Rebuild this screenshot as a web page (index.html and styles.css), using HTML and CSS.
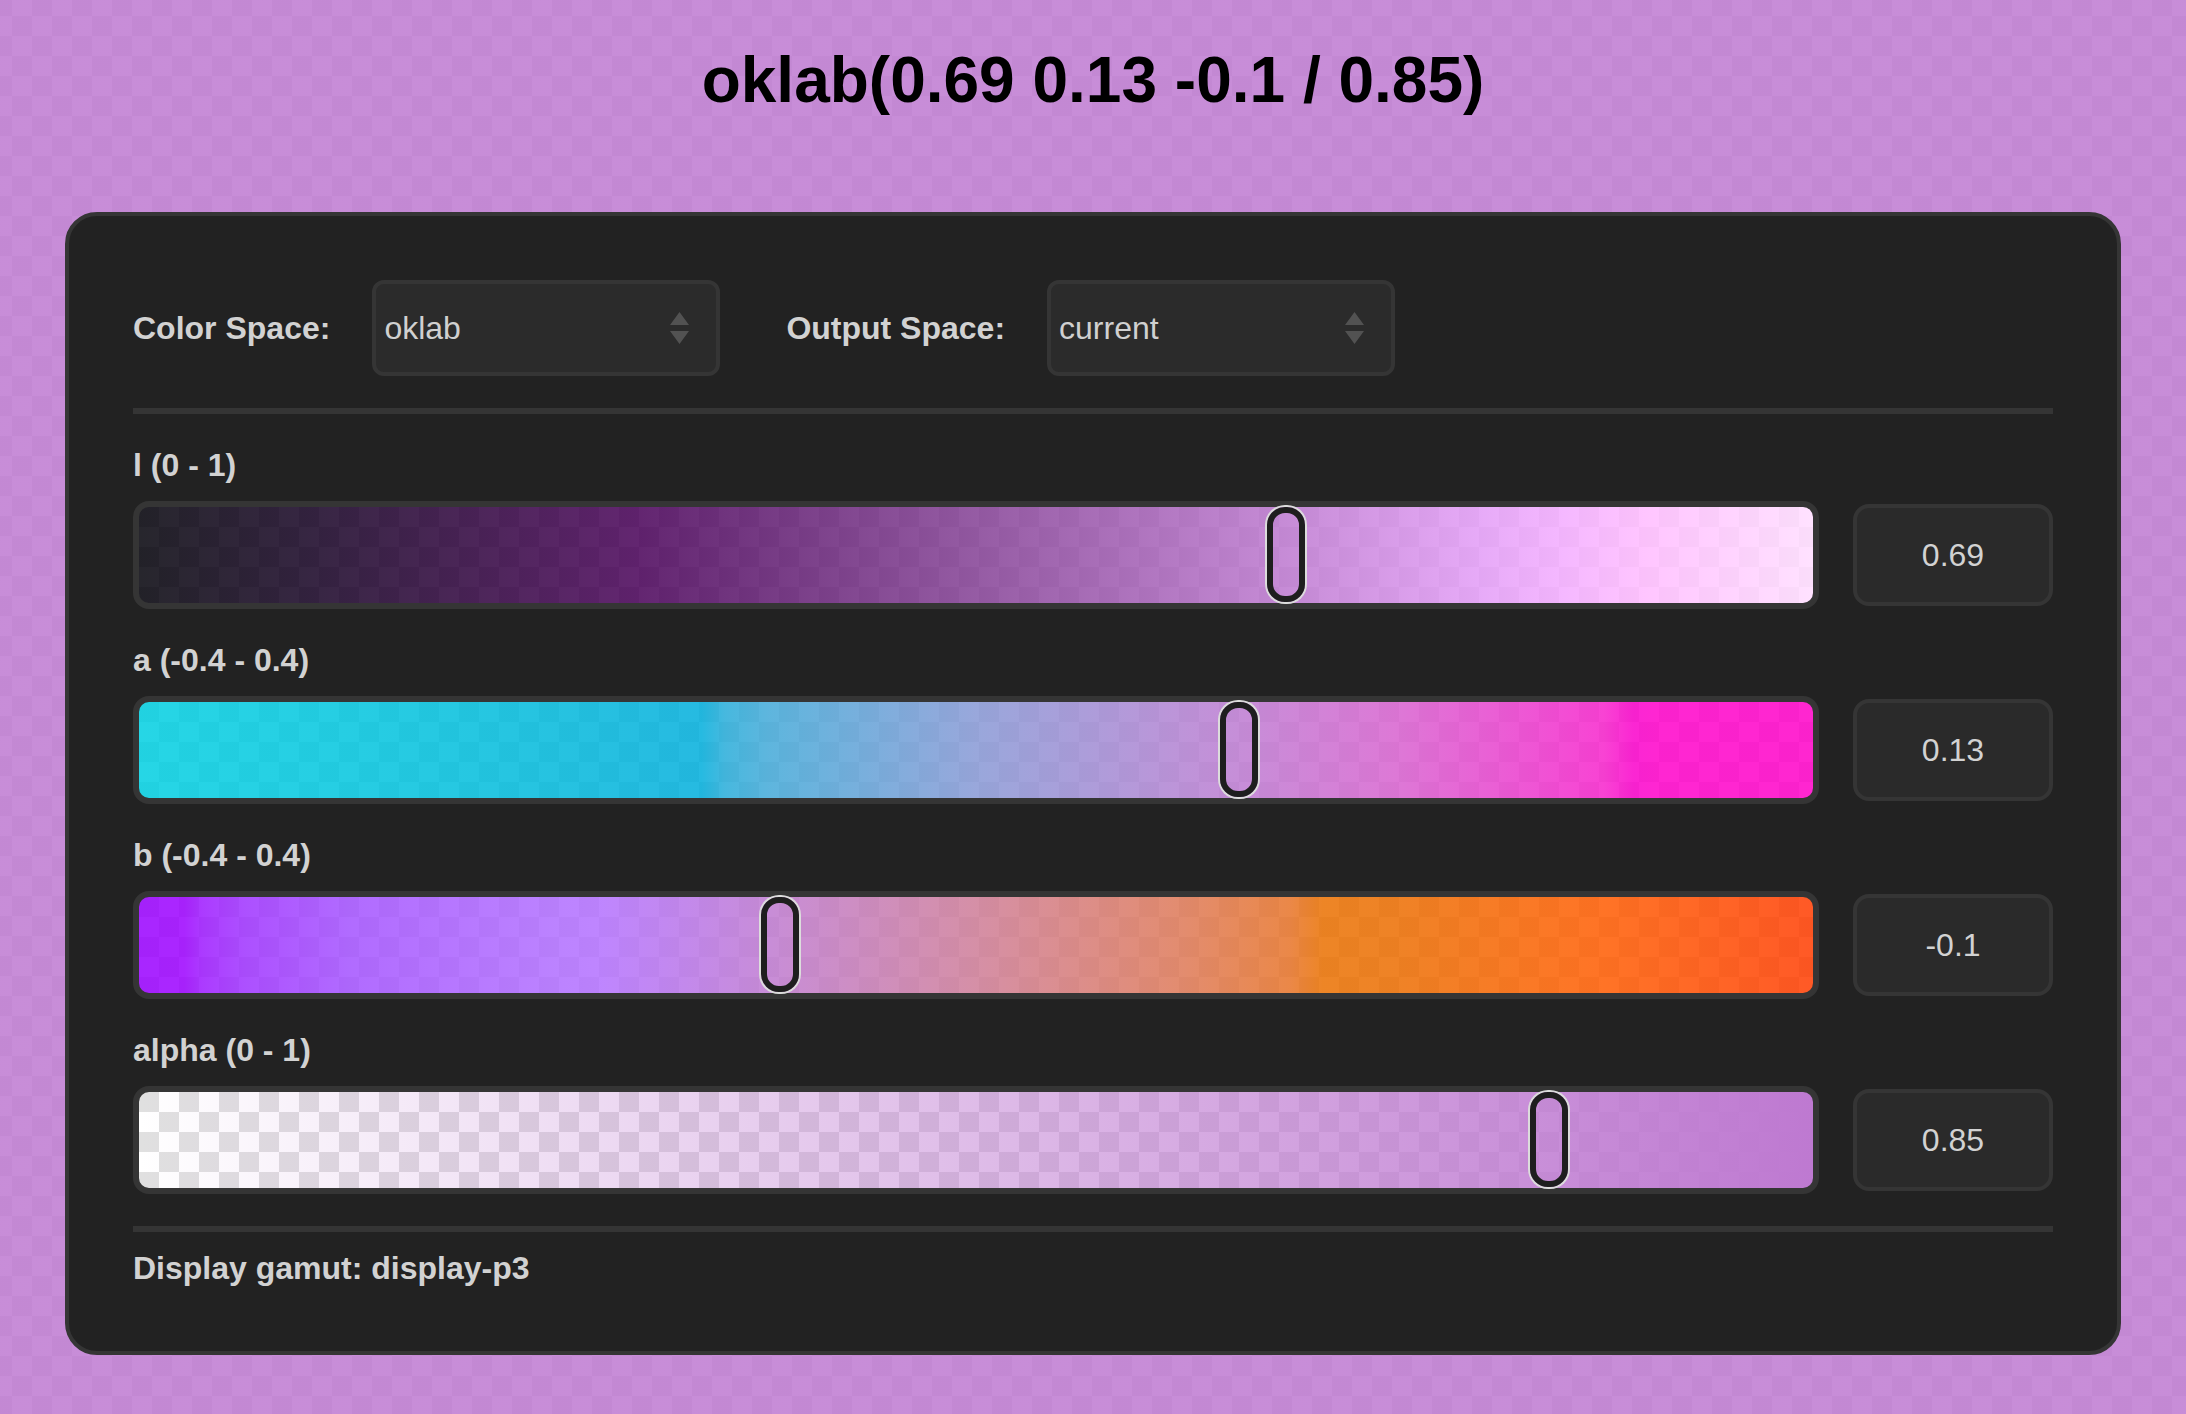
FILE: index.html
```html
<!DOCTYPE html>
<html lang="en">
<head>
<meta charset="utf-8">
<title>oklab color picker</title>
<link rel="stylesheet" href="styles.css">
</head>
<body>
<h1 class="title">oklab(0.69 0.13 -0.1 / 0.85)</h1>
<main class="card">
  <div class="controls">
    <div class="field">
      <span class="field-label">Color Space:</span>
      <div class="select">
        <span class="select-value">oklab</span>
        <svg class="select-arrows" width="19" height="32" viewBox="0 0 19 32"><path d="M0 13 L9.5 0 L19 13 Z M0 19 L19 19 L9.5 32 Z"/></svg>
      </div>
    </div>
    <div class="field">
      <span class="field-label">Output Space:</span>
      <div class="select">
        <span class="select-value">current</span>
        <svg class="select-arrows" width="19" height="32" viewBox="0 0 19 32"><path d="M0 13 L9.5 0 L19 13 Z M0 19 L19 19 L9.5 32 Z"/></svg>
      </div>
    </div>
  </div>
  <div class="divider"></div>
  <div class="channels">
    <div class="channel">
      <div class="channel-label">l (0 - 1)</div>
      <div class="channel-row">
        <div class="track track-l"><div class="thumb" style="--v:0.69"></div></div>
        <div class="value">0.69</div>
      </div>
    </div>
    <div class="channel">
      <div class="channel-label">a (-0.4 - 0.4)</div>
      <div class="channel-row">
        <div class="track track-a"><div class="thumb" style="--v:0.661"></div></div>
        <div class="value">0.13</div>
      </div>
    </div>
    <div class="channel">
      <div class="channel-label">b (-0.4 - 0.4)</div>
      <div class="channel-row">
        <div class="track track-b"><div class="thumb" style="--v:0.38"></div></div>
        <div class="value">-0.1</div>
      </div>
    </div>
    <div class="channel">
      <div class="channel-label">alpha (0 - 1)</div>
      <div class="channel-row">
        <div class="track track-alpha"><div class="thumb" style="--v:0.851"></div></div>
        <div class="value">0.85</div>
      </div>
    </div>
  </div>
  <div class="divider divider-bottom"></div>
  <div class="gamut">Display gamut: display-p3</div>
</main>
</body>
</html>
```

FILE: styles.css
```css
* { box-sizing: border-box; }

html {
  background-color: #fff;
  background-image:
    linear-gradient(rgb(190 121 209 / 0.85), rgb(190 121 209 / 0.85)),
    conic-gradient(#fff 25%, #e0e0e0 0 50%, #fff 0 75%, #e0e0e0 0);
  background-size: auto, 40px 40px;
  background-position: 0 0, 12px 16px;
  min-height: 100%;
}

body {
  margin: 0;
  font-family: "Liberation Sans", Arial, Helvetica, sans-serif;
  color: #d2d2d2;
}

.title {
  margin: 44px 0 0;
  font-size: 64px;
  line-height: 72px;
  font-weight: 700;
  text-align: center;
  color: #000;
}

.card {
  width: 2056px;
  margin: 96px auto 0;
  padding: 64px;
  background: #222222;
  border: 4px solid #353535;
  border-radius: 32px;
}

.controls {
  display: flex;
  align-items: center;
  gap: 66px;
  height: 96px;
}

.field {
  display: flex;
  align-items: center;
  gap: 42px;
}

.field-label {
  font-size: 32px;
  font-weight: 700;
  color: #d2d2d2;
}

.select {
  width: 348px;
  height: 96px;
  display: flex;
  align-items: center;
  justify-content: space-between;
  padding: 0 27px 0 8px;
  background: #2b2b2b;
  border: 4px solid #353535;
  border-radius: 12px;
  font-size: 32px;
  color: #d0d0d0;
}

.select-arrows { fill: #525252; display: block; }

.divider {
  height: 6px;
  background: #353535;
  margin: 32px 0;
}

.divider-bottom { margin: 32px 0 18px; }

.channels {
  display: flex;
  flex-direction: column;
  gap: 32px;
}

.channel-label {
  font-size: 32px;
  line-height: 38px;
  font-weight: 700;
  margin-bottom: 17px;
  color: #d2d2d2;
}

.channel-row {
  display: flex;
  align-items: center;
  gap: 34px;
}

.track {
  position: relative;
  flex: 1;
  height: 108px;
  border: 6px solid #353535;
  border-radius: 16px;
  background-color: #fff;
  background-size: 100% 100%, 40px 40px;
  background-position: 0 0, 0 0;
}

.track-l {
  background-image:
    linear-gradient(to right,
      rgb(1 0 8 / .85) 0%,
      rgb(19 0 33 / .85) 10%,
      rgb(45 0 60 / .85) 20%,
      rgb(72 0 88 / .85) 30%,
      rgb(101 32 118 / .85) 40%,
      rgb(131 63 148 / .85) 50%,
      rgb(162 93 180 / .85) 60%,
      rgb(190 121 209 / .85) 69%,
      rgb(226 155 246 / .85) 80%,
      rgb(243 171 255 / .85) 85%,
      rgb(255 187 255 / .85) 90%,
      rgb(255 220 255 / .85) 100%),
    conic-gradient(#fff 25%, #e0e0e0 0 50%, #fff 0 75%, #e0e0e0 0);
}

.track-a {
  background-image:
    linear-gradient(to right,
      rgb(0 207 225 / .85) 0%,
      rgb(0 197 222 / .85) 12.5%,
      rgb(0 184 219 / .85) 25%,
      rgb(0 174 220 / .85) 33.6%,
      rgb(38 172 217 / .85) 35%,
      rgb(65 169 216 / .85) 37.5%,
      rgb(135 152 213 / .85) 50%,
      rgb(179 129 210 / .85) 62.5%,
      rgb(190 121 209 / .85) 66.25%,
      rgb(215 97 207 / .85) 75%,
      rgb(247 34 204 / .85) 87.5%,
      rgb(250 0 203 / .85) 89.3%,
      rgb(255 0 202 / .85) 90.8%,
      rgb(255 0 200 / .85) 100%),
    conic-gradient(#fff 25%, #e0e0e0 0 50%, #fff 0 75%, #e0e0e0 0);
}

.track-b {
  background-image:
    linear-gradient(to right,
      rgb(153 0 255 / .85) 0%,
      rgb(156 0 255 / .85) 2.7%,
      rgb(157 24 255 / .85) 3.75%,
      rgb(158 49 255 / .85) 6.25%,
      rgb(163 81 255 / .85) 12.5%,
      rgb(176 109 255 / .85) 25%,
      rgb(179 112 255 / .85) 27.4%,
      rgb(183 115 239 / .85) 31.25%,
      rgb(190 121 209 / .85) 37.5%,
      rgb(206 124 151 / .85) 50%,
      rgb(222 120 85 / .85) 62.5%,
      rgb(231 115 40 / .85) 68.75%,
      rgb(234 112 0 / .85) 70.7%,
      rgb(236 109 0 / .85) 75%,
      rgb(252 95 0 / .85) 85%,
      rgb(255 91 0 / .85) 87.5%,
      rgb(255 60 0 / .85) 100%),
    conic-gradient(#fff 25%, #e0e0e0 0 50%, #fff 0 75%, #e0e0e0 0);
}

.track-alpha {
  background-image:
    linear-gradient(to right, rgb(190 121 209 / 0), rgb(190 121 209 / 1)),
    conic-gradient(#fff 25%, #e0e0e0 0 50%, #fff 0 75%, #e0e0e0 0);
}

.thumb {
  position: absolute;
  top: 0;
  left: calc(2px + var(--v) * (100% - 42px));
  width: 38px;
  height: 95px;
  border: 6px solid #1e1e1e;
  border-radius: 18px;
  box-shadow: 0 0 0 2px #dcdcdc;
}

.value {
  width: 200px;
  height: 102px;
  flex: none;
  display: flex;
  align-items: center;
  justify-content: center;
  background: #2a2a2a;
  border: 4px solid #353535;
  border-radius: 16px;
  font-size: 32px;
  color: #d2d2d2;
}

.gamut {
  font-size: 32px;
  font-weight: 700;
  color: #d2d2d2;
}
```
